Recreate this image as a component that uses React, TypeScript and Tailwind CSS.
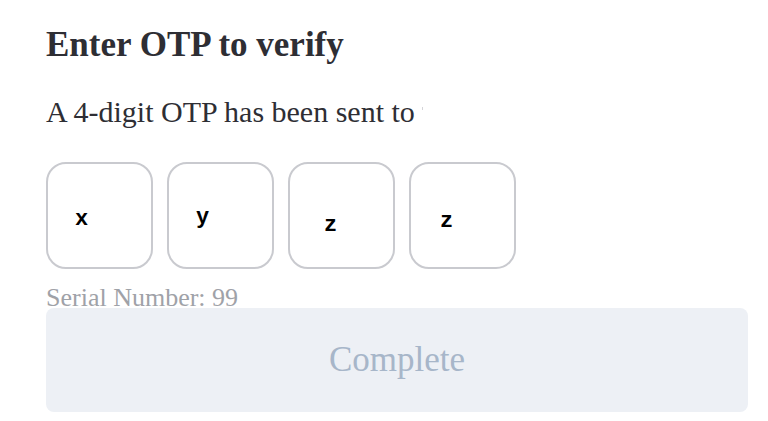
export default function App() {
    const cells = [
        { ch: 'x', cls: 'pl-[27px] pt-[45px]' },
        { ch: 'y', cls: 'pl-[27px] pt-[43px]' },
        { ch: 'z', cls: 'pl-[34px] pt-[51px]' },
        { ch: 'z', cls: 'pl-[29px] pt-[47px]' },
    ]

    return (
        <div className="min-h-[421px] w-[768px] bg-white pl-[46px] pr-[20px] pt-[25px] font-['Liberation_Serif',serif]">
            {/* Title */}
            <h1 className="text-[35px] font-bold leading-[40px] text-[#2e2e34]">Enter OTP to verify</h1>

            {/* Subtitle */}
            <p className="mt-[31px] text-[30px] leading-[32px] text-[#2e2e34]">
                A 4-digit OTP has been sent to <span className="inline-block h-[3px] w-px align-[12px] bg-[#d4d4d8]" />
            </p>

            {/* OTP boxes */}
            <div className="mt-[34px] flex gap-[14px]">
                {cells.map((c, i) => (
                    <div
                        key={i}
                        className={`h-[107px] w-[107px] rounded-[20px] border-2 border-[#c9cacf] font-['Liberation_Mono',monospace] text-[22px] font-bold leading-none text-black ${c.cls}`}
                    >
                        {c.ch}
                    </div>
                ))}
            </div>

            {/* Serial */}
            <p className="mt-[18px] h-[22px] text-[26px] leading-[22px] text-[#9fa2a8]">Serial Number: 99</p>

            {/* Complete button */}
            <button className="-mt-[1px] flex h-[104px] w-[702px] items-center justify-center rounded-[8px] bg-[#edf0f5] text-[35px] leading-[40px] text-[#a7b6c9]">
                Complete
            </button>
        </div>
    )
}
